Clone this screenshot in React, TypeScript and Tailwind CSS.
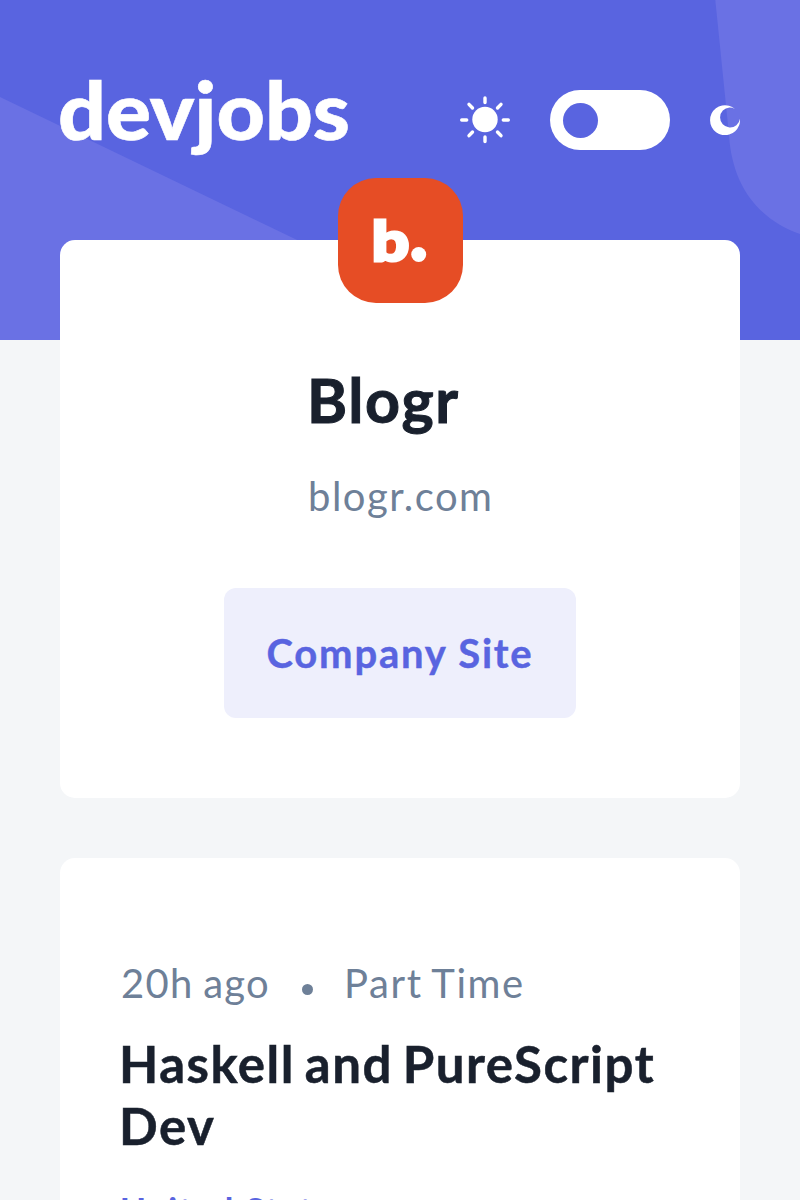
function Sun() {
  return (
    <svg className="block h-[50px] w-[50px]" viewBox="0 0 50 50" fill="none" stroke="#fff" strokeWidth="3.4" strokeLinecap="round">
      <circle cx="25" cy="24.5" r="12.7" fill="#fff" stroke="none" />
      <path d="M25 3v4.500M25 42v4.500M1.7 25h5M43.3 25h5M9 9.3l3.5 3.7M41 9.3L37.500 13M9 40.700l3.500-3.700M41 40.700l-3.500-3.700" />
    </svg>
  );
}

function Moon() {
  return (
    <svg className="block h-[30px] w-[30px]" viewBox="0 0 30 30">
      <path d="M25 3.900A15 15 0 1 0 30 13.800A10 10 0 1 1 19.500 2.500Q22.500 2.500 25 3.900Z" fill="#fff" />
    </svg>
  );
}

function Pattern() {
  return (
    <svg className="absolute inset-0 h-[340px] w-[800px]" viewBox="0 0 800 340" fill="#6A71E4">
      <path d="M0 97L505 340H0Z" />
      <path d="M715.300 0L729 135C732 184 757 219 800 234V0Z" />
    </svg>
  );
}

export default function App() {
  return (
    <div className="h-[1200px] w-[800px] overflow-hidden bg-[#F4F6F8] font-['Lato',sans-serif]">
      <header className="relative h-[340px] bg-[#5964E0]">
        <Pattern />
        <div className="relative flex h-[160px] items-end px-[60px]">
          <svg className="block h-[80px] w-[290px] overflow-visible" viewBox="0 0 290 80" role="img" aria-label="devjobs">
            <text x="-2" y="60" fontSize="80" fontWeight="900" fill="#fff" stroke="#fff" strokeWidth="0.6" textLength="292" lengthAdjust="spacingAndGlyphs">devjobs</text>
          </svg>
          <div className="ml-auto flex h-[80px] items-center gap-[40px]">
            <Sun />
            <button className="flex h-[60px] w-[120px] items-center rounded-full bg-white px-[13px]" aria-label="Toggle theme">
              <span className="mt-[1px] size-[35px] rounded-full bg-[#5964E0]" />
            </button>
            <Moon />
          </div>
        </div>
      </header>
      <main className="relative -mt-[100px] flex flex-col gap-[60px] px-[60px]">
        <section className="flex h-[558px] flex-col items-center rounded-[15px] bg-white">
          <div className="-mt-[62px] flex size-[125px] shrink-0 items-center justify-center rounded-[38px] bg-[#E64D25]">
            <svg className="block size-[125px]" viewBox="0 0 125 125" role="img" aria-label="Blogr">
              <text x="33.800" y="83" fontSize="55" fontWeight="900" fill="#fff" stroke="#fff" strokeWidth="3" textLength="37.500" lengthAdjust="spacingAndGlyphs">b</text>
              <circle cx="80.700" cy="76.500" r="7.500" fill="#fff" />
            </svg>
          </div>
          <div className="mt-[59px] w-[184px] whitespace-nowrap">
            <h1 className="-ml-[1px] h-[76px] text-[61px] leading-[76px] font-bold tracking-[1.6px] text-[#19202D] [-webkit-text-stroke:1px_#19202D]">Blogr</h1>
            <p className="mt-[33px] h-[50px] text-[40px] leading-[50px] tracking-[1.5px] text-[#6E8098]">blogr.com</p>
          </div>
          <a className="mt-[67px] flex h-[130px] w-[352px] shrink-0 items-center justify-center rounded-[12px] bg-[#EEEFFC] pb-[1px] text-[40px] font-bold tracking-[1.8px] text-[#5964E0] [-webkit-text-stroke:0.4px_#5964E0]">Company Site</a>
        </section>
        <section className="h-[700px] rounded-[15px] bg-white px-[60px] pt-[100px]">
          <div className="flex h-[50px] items-center pl-[1px] text-[40px] text-[#6E8098]">
            <span className="tracking-[1.3px] [word-spacing:-2px]">20h ago</span>
            <span className="mt-[13px] mr-[32px] ml-[32px] size-[11px] rounded-full bg-[#6E8098]" />
            <span className="-ml-[1px] tracking-[1.6px] [word-spacing:-2px]">Part Time</span>
          </div>
          <h2 className="mt-[25px] -ml-[1px] text-[51px] leading-[62px] font-bold tracking-[1.5px] text-[#19202D] [-webkit-text-stroke:0.5px_#19202D] [word-spacing:-4px]">
            Haskell and PureScript<br />Dev
          </h2>
          <p className="mt-[31px] text-[35px] leading-[42px] font-bold tracking-[1.6px] text-[#5964E0]">United States</p>
        </section>
      </main>
    </div>
  );
}
